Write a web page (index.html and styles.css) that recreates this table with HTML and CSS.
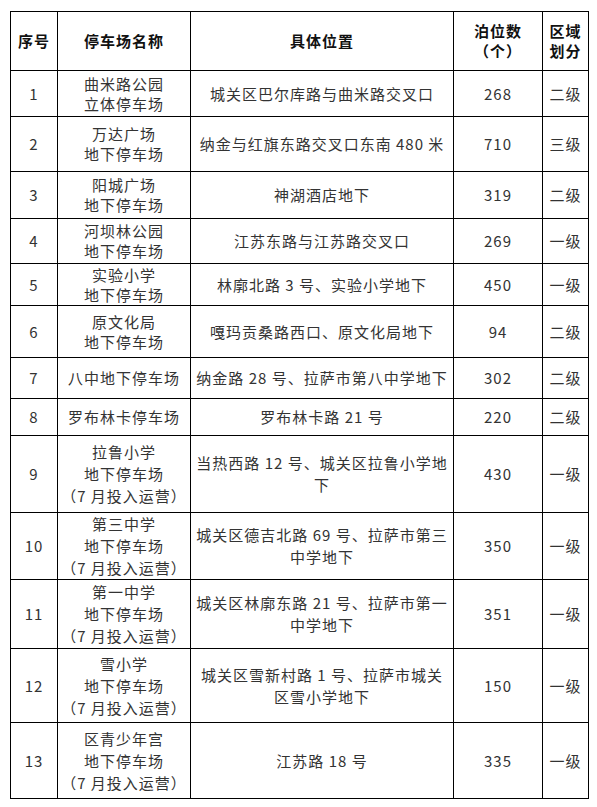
FILE: index.html
```html
<!DOCTYPE html>
<html lang="zh-CN">
<head>
<meta charset="utf-8">
<title>停车场列表</title>
<link rel="stylesheet" href="styles.css">
</head>
<body>
<table class="parking">
  <colgroup>
    <col class="c-no">
    <col class="c-name">
    <col class="c-loc">
    <col class="c-num">
    <col class="c-lvl">
  </colgroup>
  <thead>
    <tr class="head">
      <th>序号</th>
      <th>停车场名称</th>
      <th>具体位置</th>
      <th class="two">泊位数<br>（个）</th>
      <th class="two">区域<br>划分</th>
    </tr>
  </thead>
  <tbody>
    <tr><td>1</td><td class="two">曲米路公园<br>立体停车场</td><td>城关区巴尔库路与曲米路交叉口</td><td>268</td><td>二级</td></tr>
    <tr><td>2</td><td class="two">万达广场<br>地下停车场</td><td>纳金与红旗东路交叉口东南 480 米</td><td>710</td><td>三级</td></tr>
    <tr><td>3</td><td class="two">阳城广场<br>地下停车场</td><td>神湖酒店地下</td><td>319</td><td>二级</td></tr>
    <tr><td>4</td><td class="two">河坝林公园<br>地下停车场</td><td>江苏东路与江苏路交叉口</td><td>269</td><td>一级</td></tr>
    <tr><td>5</td><td class="two">实验小学<br>地下停车场</td><td>林廓北路 3 号、实验小学地下</td><td>450</td><td>一级</td></tr>
    <tr><td>6</td><td class="two">原文化局<br>地下停车场</td><td>嘎玛贡桑路西口、原文化局地下</td><td>94</td><td>二级</td></tr>
    <tr><td>7</td><td>八中地下停车场</td><td>纳金路 28 号、拉萨市第八中学地下</td><td>302</td><td>二级</td></tr>
    <tr><td>8</td><td>罗布林卡停车场</td><td>罗布林卡路 21 号</td><td>220</td><td>二级</td></tr>
    <tr><td>9</td><td class="three">拉鲁小学<br>地下停车场<br>（7 月投入运营）</td><td class="three">当热西路 12 号、城关区拉鲁小学地<br>下</td><td>430</td><td>一级</td></tr>
    <tr><td>10</td><td class="three">第三中学<br>地下停车场<br>（7 月投入运营）</td><td class="three">城关区德吉北路 69 号、拉萨市第三<br>中学地下</td><td>350</td><td>一级</td></tr>
    <tr><td>11</td><td class="three">第一中学<br>地下停车场<br>（7 月投入运营）</td><td class="three">城关区林廓东路 21 号、拉萨市第一<br>中学地下</td><td>351</td><td>一级</td></tr>
    <tr><td>12</td><td class="three">雪小学<br>地下停车场<br>（7 月投入运营）</td><td class="three">城关区雪新村路 1 号、拉萨市城关<br>区雪小学地下</td><td>150</td><td>一级</td></tr>
    <tr><td>13</td><td class="three">区青少年宫<br>地下停车场<br>（7 月投入运营）</td><td>江苏路 18 号</td><td>335</td><td>一级</td></tr>
  </tbody>
</table>
</body>
</html>
```

FILE: styles.css
```css
html, body {
  margin: 0;
  padding: 0;
  background: #ffffff;
}

body {
  padding: 11px 10px 0 10px;
  font-family: "Noto Sans CJK SC", "Noto Sans", sans-serif;
  font-size: 15px;
  letter-spacing: 1px;
  color: #333333;
}

.parking {
  border-collapse: collapse;
  table-layout: fixed;
  width: 578px;
}

.c-no { width: 47px; }
.c-name { width: 133px; }
.c-loc { width: 263px; }
.c-num { width: 89px; }
.c-lvl { width: 46px; }

.parking th,
.parking td {
  border: 1px solid #000;
  padding: 0 2px;
  text-align: center;
  vertical-align: middle;
  white-space: nowrap;
  line-height: 20px;
  overflow: hidden;
}

.parking th {
  font-weight: 700;
  color: #111;
  font-size: 15px;
}

.parking th.two { line-height: 20px; }

.parking td.two { line-height: 20px; }
.parking td.three { line-height: 22px; }

.head { height: 59px; }

tbody tr:nth-child(1) { height: 46px; }
tbody tr:nth-child(2) { height: 55px; }
tbody tr:nth-child(3) { height: 47px; }
tbody tr:nth-child(4) { height: 45px; }
tbody tr:nth-child(5) { height: 42px; }
tbody tr:nth-child(6) { height: 52px; }
tbody tr:nth-child(7) { height: 41px; }
tbody tr:nth-child(8) { height: 37px; }
tbody tr:nth-child(9) { height: 77px; }
tbody tr:nth-child(10) { height: 66px; }
tbody tr:nth-child(11) { height: 69px; }
tbody tr:nth-child(12) { height: 74px; }
tbody tr:nth-child(13) { height: 76px; }
```
